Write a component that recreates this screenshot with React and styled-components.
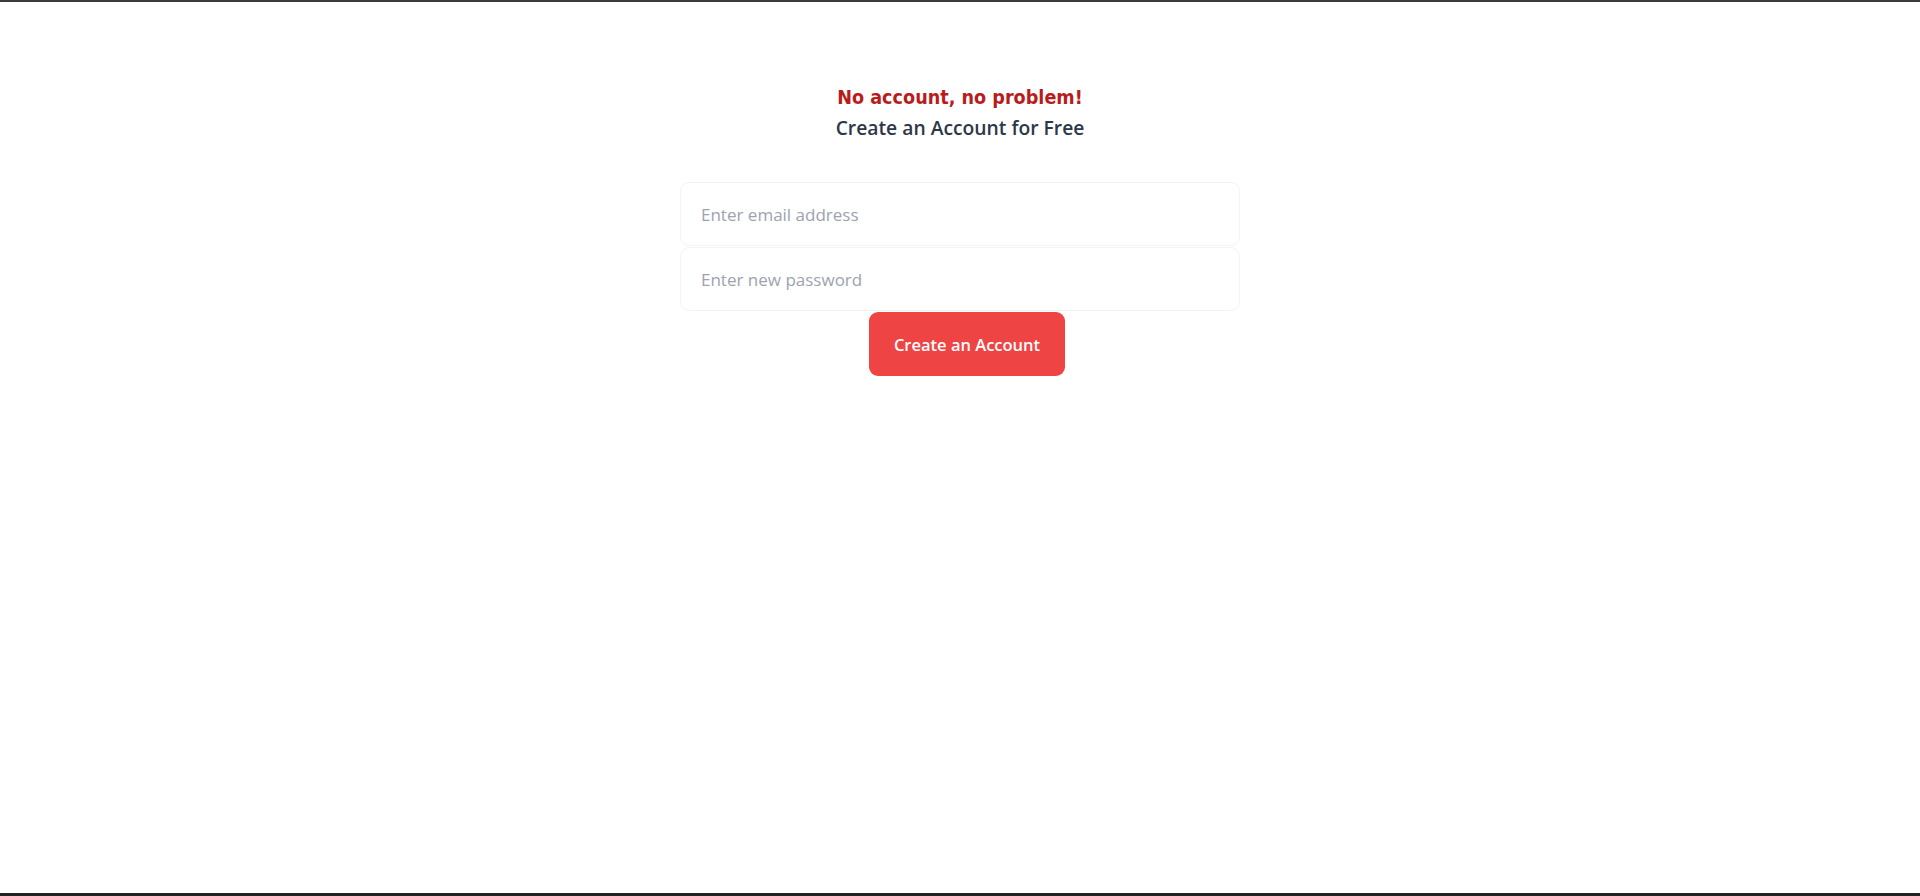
import React from 'react';
import styled, { createGlobalStyle } from 'styled-components';

const GlobalStyle = createGlobalStyle`
    html, body {
        margin: 0;
        padding: 0;
        background: #ffffff;
    }
    * { box-sizing: border-box; }
`;

const Page = styled.div`
    height: 896px;
    border-top: 2px solid #3c3c3c;
    border-bottom: 3px solid #222222;
    display: flex;
    flex-direction: column;
    align-items: center;
    padding-top: 81px;
    font-family: "Open Sans", "Noto Sans", sans-serif;
`;

const Heading = styled.div`
    text-align: center;
    margin-bottom: 39px;
`;

const Tagline = styled.div`
    font-family: "DejaVu Sans Condensed", "DejaVu Sans", sans-serif;
    font-weight: 700;
    font-size: 19.6px;
    line-height: 30px;
    color: #b91c1c;
`;

const Subtitle = styled.div`
    font-weight: 600;
    font-size: 19.3px;
    line-height: 30px;
    color: #2d3748;
`;

const Form = styled.form`
    display: flex;
    flex-direction: column;
    align-items: center;
    gap: 1px;
`;

const Field = styled.input`
    width: 560px;
    height: 64px;
    padding: 0 20px;
    border: 1px solid #f3f4f6;
    border-radius: 9px;
    background: #fff;
    font-family: "Open Sans", "Noto Sans", sans-serif;
    font-size: 17px;
    font-weight: 400;
    color: #374151;
    outline: none;
    &::placeholder {
        color: #9ca3af;
    }
`;

const Submit = styled.button`
    margin-left: 14px;
    width: 196px;
    height: 64px;
    border: none;
    border-radius: 9px;
    background: #ef4444;
    color: #fff;
    font-family: "Open Sans", "Noto Sans", sans-serif;
    font-size: 16.5px;
    font-weight: 600;
    cursor: pointer;
`;

const App = () => {
    return (
        <>
            <GlobalStyle />
            <Page>
                <Heading>
                    <Tagline>No account, no problem!</Tagline>
                    <Subtitle>Create an Account for Free</Subtitle>
                </Heading>
                <Form onSubmit={(e) => e.preventDefault()}>
                    <Field type="email" placeholder="Enter email address" />
                    <Field type="password" placeholder="Enter new password" />
                    <Submit type="submit">Create an Account</Submit>
                </Form>
            </Page>
        </>
    );
};

export default App;
